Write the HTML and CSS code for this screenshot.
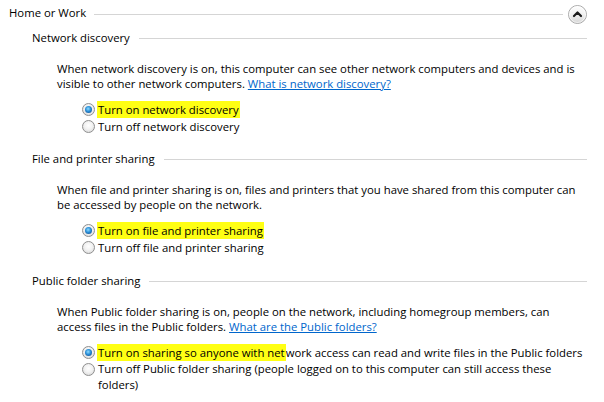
FILE: index.html
```html
<!DOCTYPE html>
<html>
<head>
<meta charset="utf-8">
<link rel="stylesheet" href="styles.css">
</head>
<body>
<div class="page">
  <div class="group-head">
    <span class="group-title">Home or Work</span>
    <span class="rule"></span>
    <span class="collapse">
      <svg width="19" height="19" viewBox="0 0 19 19">
        <defs>
          <linearGradient id="g" x1="0" y1="0" x2="0" y2="1">
            <stop offset="0" stop-color="#ffffff"/>
            <stop offset="0.5" stop-color="#f0f0f0"/>
            <stop offset="1" stop-color="#d4d4d4"/>
          </linearGradient>
        </defs>
        <circle cx="9.5" cy="9.5" r="9" fill="url(#g)" stroke="#a9a9a9" stroke-width="1"/>
        <circle cx="9.5" cy="9.5" r="8" fill="none" stroke="#ffffff" stroke-width="0.8" opacity="0.8"/>
        <path d="M6 11 L9.5 7.5 L13 11" fill="none" stroke="#1a1a1a" stroke-width="2.2" stroke-linecap="round" stroke-linejoin="round"/>
      </svg>
    </span>
  </div>

  <section class="section">
    <div class="sec-head"><span class="sec-title">Network discovery</span><span class="rule"></span></div>
    <p class="desc">
      <span class="ln">When network discovery is on, this computer can see other network computers and devices and is</span>
      <span class="ln">visible to other network computers. <a href="#" class="link">What is network discovery?</a></span>
    </p>
    <div class="options">
      <div class="opt"><span class="radio on"></span><span class="txt"><span class="hl">Turn on network discovery</span></span></div>
      <div class="opt"><span class="radio"></span><span class="txt">Turn off network discovery</span></div>
    </div>
  </section>

  <section class="section s2">
    <div class="sec-head"><span class="sec-title">File and printer sharing</span><span class="rule"></span></div>
    <p class="desc">
      <span class="ln">When file and printer sharing is on, files and printers that you have shared from this computer can</span>
      <span class="ln">be accessed by people on the network.</span>
    </p>
    <div class="options">
      <div class="opt"><span class="radio on"></span><span class="txt"><span class="hl">Turn on file and printer sharing</span></span></div>
      <div class="opt"><span class="radio"></span><span class="txt">Turn off file and printer sharing</span></div>
    </div>
  </section>

  <section class="section s3">
    <div class="sec-head"><span class="sec-title">Public folder sharing</span><span class="rule"></span></div>
    <p class="desc">
      <span class="ln">When Public folder sharing is on, people on the network, including homegroup members, can</span>
      <span class="ln">access files in the Public folders. <a href="#" class="link">What are the Public folders?</a></span>
    </p>
    <div class="options">
      <div class="opt"><span class="radio on"></span><span class="txt"><span class="hl">Turn on sharing so anyone with net</span>work access can read and write files in the Public folders</span></div>
      <div class="opt"><span class="radio"></span><span class="txt"><span class="ln">Turn off Public folder sharing (people logged on to this computer can still access these</span><span class="ln">folders)</span></span></div>
    </div>
  </section>
</div>
</body>
</html>
```

FILE: styles.css
```css
html, body {
  margin: 0;
  padding: 0;
  background: #ffffff;
}

body {
  font-family: "Open Sans", "Noto Sans", "Liberation Sans", sans-serif;
  font-size: 11.33px;
  color: #000000;
  width: 604px;
  height: 402px;
  overflow: hidden;
}

.page {
  padding: 0 17px 0 9px;
}

.group-head {
  display: flex;
  align-items: center;
  height: 29px;
}

.group-title {
  line-height: 16px;
  white-space: nowrap;
  margin-bottom: 4px;
  margin-right: 8px;
}

.rule {
  flex: 1;
  height: 1px;
  background: #d5d5d5;
}

.collapse {
  display: flex;
  width: 19px;
  height: 19px;
  margin-left: 5px;
}

.section {
  padding-left: 23px;
  margin-top: 1px;
}

.s2 {
  margin-top: 16px;
}

.s3 {
  margin-top: 17px;
}

.sec-head {
  display: flex;
  align-items: center;
  height: 16px;
}

.sec-title {
  white-space: nowrap;
  margin-right: 9px;
  line-height: 16px;
}

.desc {
  margin: 15px 0 0 0;
  padding-left: 25px;
  line-height: 15px;
}

.ln {
  display: block;
  white-space: nowrap;
}

.link {
  color: #0066cc;
  text-decoration: underline;
}

.options {
  margin-top: 10px;
  padding-left: 50px;
}

.opt {
  display: flex;
  align-items: flex-start;
  line-height: 17px;
  white-space: nowrap;
}

.opt .ln {
  line-height: 16px;
}

.radio {
  flex: none;
  position: relative;
  width: 11px;
  height: 11px;
  margin-top: 2px;
  margin-right: 3px;
  border: 1px solid #8f8f8f;
  border-radius: 50%;
  background: radial-gradient(circle at 50% 40%, #ffffff 0%, #f2f2f2 45%, #d2d2d2 100%);
}

.radio.on::after {
  content: "";
  position: absolute;
  left: 2px;
  top: 2px;
  width: 7px;
  height: 7px;
  border-radius: 50%;
  background: radial-gradient(circle at 45% 40%, #8fdcff 0%, #2a8fd8 45%, #0c3d7a 100%);
}

.txt {
  display: block;
}

.hl {
  background: #ffff14;
  padding: 1px 1px 1px 1px;
  margin-left: -1px;
}
```
